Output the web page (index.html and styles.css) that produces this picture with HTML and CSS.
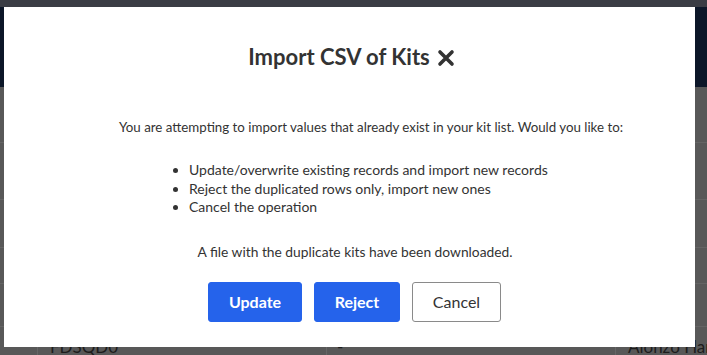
FILE: index.html
```html
<!DOCTYPE html>
<html>
<head>
<meta charset="utf-8">
<link rel="stylesheet" href="styles.css">
</head>
<body>
<div class="page">
  <div class="header"></div>
  <div class="table">
    <div class="row r1"></div>
    <div class="row r2"></div>
    <div class="row r3"></div>
    <div class="row r4"></div>
    <div class="row r5"></div>
    <div class="row r6">
      <div class="cell c0"></div>
      <div class="cell c1">FDSQD0</div>
      <div class="cell c2">-</div>
      <div class="cell c3">Alonzo Hamilton</div>
    </div>
  </div>
</div>
<div class="modal">
  <div class="title-row">
    <h2 class="title">Import CSV of Kits</h2>
    <svg class="close" width="18" height="18" viewBox="0 0 18 18"><path d="M3 3 L15 15 M15 3 L3 15" stroke="#333" stroke-width="3.6" stroke-linecap="round"/></svg>
  </div>
  <p class="lead">You are attempting to import values that already exist in your kit list. Would you like to:</p>
  <ul class="options">
    <li>Update/overwrite existing records and import new records</li>
    <li>Reject the duplicated rows only, import new ones</li>
    <li>Cancel the operation</li>
  </ul>
  <p class="note">A file with the duplicate kits have been downloaded.</p>
  <div class="actions">
    <button class="btn primary btn-update">Update</button>
    <button class="btn primary btn-reject">Reject</button>
    <button class="btn secondary btn-cancel">Cancel</button>
  </div>
</div>
</body>
</html>
```
FILE: styles.css
```css
html, body {
  margin: 0;
  padding: 0;
  width: 707px;
  height: 355px;
  overflow: hidden;
  font-family: "Lato", "Liberation Sans", sans-serif;
}
.page {
  background: #585858;
  height: 355px;
}
.header {
  height: 80px;
  background: #0c1628;
  border-top: 7px solid #3a3c44;
}
.row {
  border-bottom: 1px solid #646464;
  box-sizing: border-box;
}
.r1 { height: 56px; }
.r2 { height: 57px; }
.r3 { height: 48px; }
.r4 { height: 36px; }
.r5 { height: 43px; }
.r6 {
  display: flex;
  height: 40px;
  border-bottom: none;
}
.cell {
  box-sizing: border-box;
  border-right: 1px solid #666;
  color: #1c1c1c;
  font-size: 17px;
  padding-top: 9px;
  white-space: nowrap;
  overflow: hidden;
}
.c0 { width: 38px; }
.c1 { width: 289px; padding-left: 12px; }
.c2 { width: 289px; padding-left: 10px; }
.c3 { flex: 1; padding-left: 12px; border-right: none; }

.modal {
  position: absolute;
  top: 7px;
  left: 4px;
  width: 691px;
  height: 340px;
  background: #fff;
  box-sizing: border-box;
  display: flex;
  flex-direction: column;
  color: #333;
}
.title-row {
  display: flex;
  justify-content: center;
  align-items: center;
  gap: 7px;
  margin-top: 37px;
  padding-left: 4px;
  height: 26px;
}
.title {
  margin: 0;
  font-size: 22px;
  font-weight: 700;
  color: #333;
  line-height: 26px;
}
.close {
  display: block;
  margin-top: 2px;
}
.lead {
  margin: 48px 0 0;
  font-size: 13.3px;
  line-height: 18px;
  text-align: center;
  padding-left: 43px;
  color: #333;
}
.options {
  margin: 25px 0 0;
  padding-left: 185px;
  font-size: 14px;
  line-height: 18.5px;
  color: #333;
}
.note {
  margin: 26px 0 0;
  font-size: 13.8px;
  line-height: 18px;
  text-align: center;
  padding-left: 11px;
  color: #333;
}
.actions {
  display: flex;
  justify-content: center;
  gap: 12px;
  margin-top: 21px;
  padding-left: 10px;
}
.btn {
  height: 40px;
  border-radius: 3px;
  font-family: "Lato", "Liberation Sans", sans-serif;
  font-size: 16px;
  cursor: pointer;
  padding: 0;
}
.primary {
  background: #2563eb;
  border: 1px solid #2563eb;
  color: #fff;
  font-weight: 700;
}
.secondary {
  background: #fff;
  border: 1px solid #8a8a8a;
  color: #333;
}
.btn-update { width: 94px; }
.btn-reject { width: 86px; }
.btn-cancel { width: 89px; }
```
